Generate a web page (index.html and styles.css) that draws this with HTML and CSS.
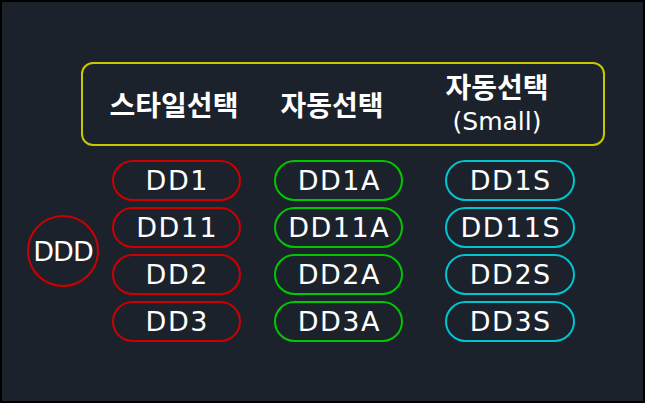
FILE: index.html
```html
<!DOCTYPE html>
<html lang="ko">
<head>
<meta charset="utf-8">
<title>DD 선택</title>
<link rel="stylesheet" href="styles.css">
</head>
<body>
<div class="frame">
  <div class="header">
    <div class="hcell hcell-style">스타일선택</div>
    <div class="hcell hcell-auto">자동선택</div>
    <div class="hcell hcell-small"><span class="hline">자동선택</span><span class="hline latin">(Small)</span></div>
  </div>
  <div class="body">
    <div class="circle">DDD</div>
    <div class="col col-red">
      <div class="pill">DD1</div>
      <div class="pill">DD11</div>
      <div class="pill">DD2</div>
      <div class="pill">DD3</div>
    </div>
    <div class="col col-green">
      <div class="pill">DD1A</div>
      <div class="pill">DD11A</div>
      <div class="pill">DD2A</div>
      <div class="pill">DD3A</div>
    </div>
    <div class="col col-cyan">
      <div class="pill">DD1S</div>
      <div class="pill">DD11S</div>
      <div class="pill">DD2S</div>
      <div class="pill">DD3S</div>
    </div>
  </div>
</div>
</body>
</html>
```

FILE: styles.css
```css
html, body {
  margin: 0;
  padding: 0;
  background: #000;
}

.frame {
  box-sizing: border-box;
  width: 645px;
  height: 403px;
  border: 2px solid #000;
  background: #1c222b;
  padding: 60px 0 0 25px;
  color: #ffffff;
  font-family: "DejaVu Sans", "Liberation Sans", sans-serif;
}

.header {
  box-sizing: border-box;
  width: 524px;
  height: 84px;
  margin-left: 54px;
  border: 2px solid #c8c800;
  border-radius: 12px;
  display: flex;
  align-items: center;
  padding-left: 17px;
  column-gap: 10px;
  font-family: "Noto Sans CJK KR", "DejaVu Sans", sans-serif;
  font-weight: 700;
  font-size: 28px;
  line-height: 1;
}

.hcell {
  text-align: center;
  white-space: nowrap;
}

.hcell-style { width: 148px; }
.hcell-auto { width: 148px; }
.hcell-small {
  width: 162px;
  display: flex;
  flex-direction: column;
  align-items: center;
}

.hline {
  display: block;
  line-height: 36px;
}

.hline.latin {
  font-family: "DejaVu Sans", "Liberation Sans", sans-serif;
  font-weight: 400;
  font-size: 25px;
}

.body {
  display: flex;
  align-items: center;
  margin-top: 14px;
}

.circle {
  box-sizing: border-box;
  width: 72px;
  height: 72px;
  border: 2px solid #cc0000;
  border-radius: 50%;
  display: flex;
  align-items: center;
  justify-content: center;
  font-size: 27px;
  letter-spacing: -1px;
}

.col {
  display: flex;
  flex-direction: column;
  row-gap: 6px;
}

.col-red { margin-left: 13px; width: 129px; }
.col-green { margin-left: 33px; width: 129px; }
.col-cyan { margin-left: 42px; width: 130px; }

.pill {
  box-sizing: border-box;
  height: 41px;
  border: 2px solid;
  border-radius: 21px;
  display: flex;
  align-items: center;
  justify-content: center;
  font-size: 27px;
  letter-spacing: 1.5px;
  padding-left: 1.5px;
}

.col-red .pill { border-color: #cc0000; }
.col-green .pill { border-color: #00c800; }
.col-cyan .pill { border-color: #00c4d0; }
```
